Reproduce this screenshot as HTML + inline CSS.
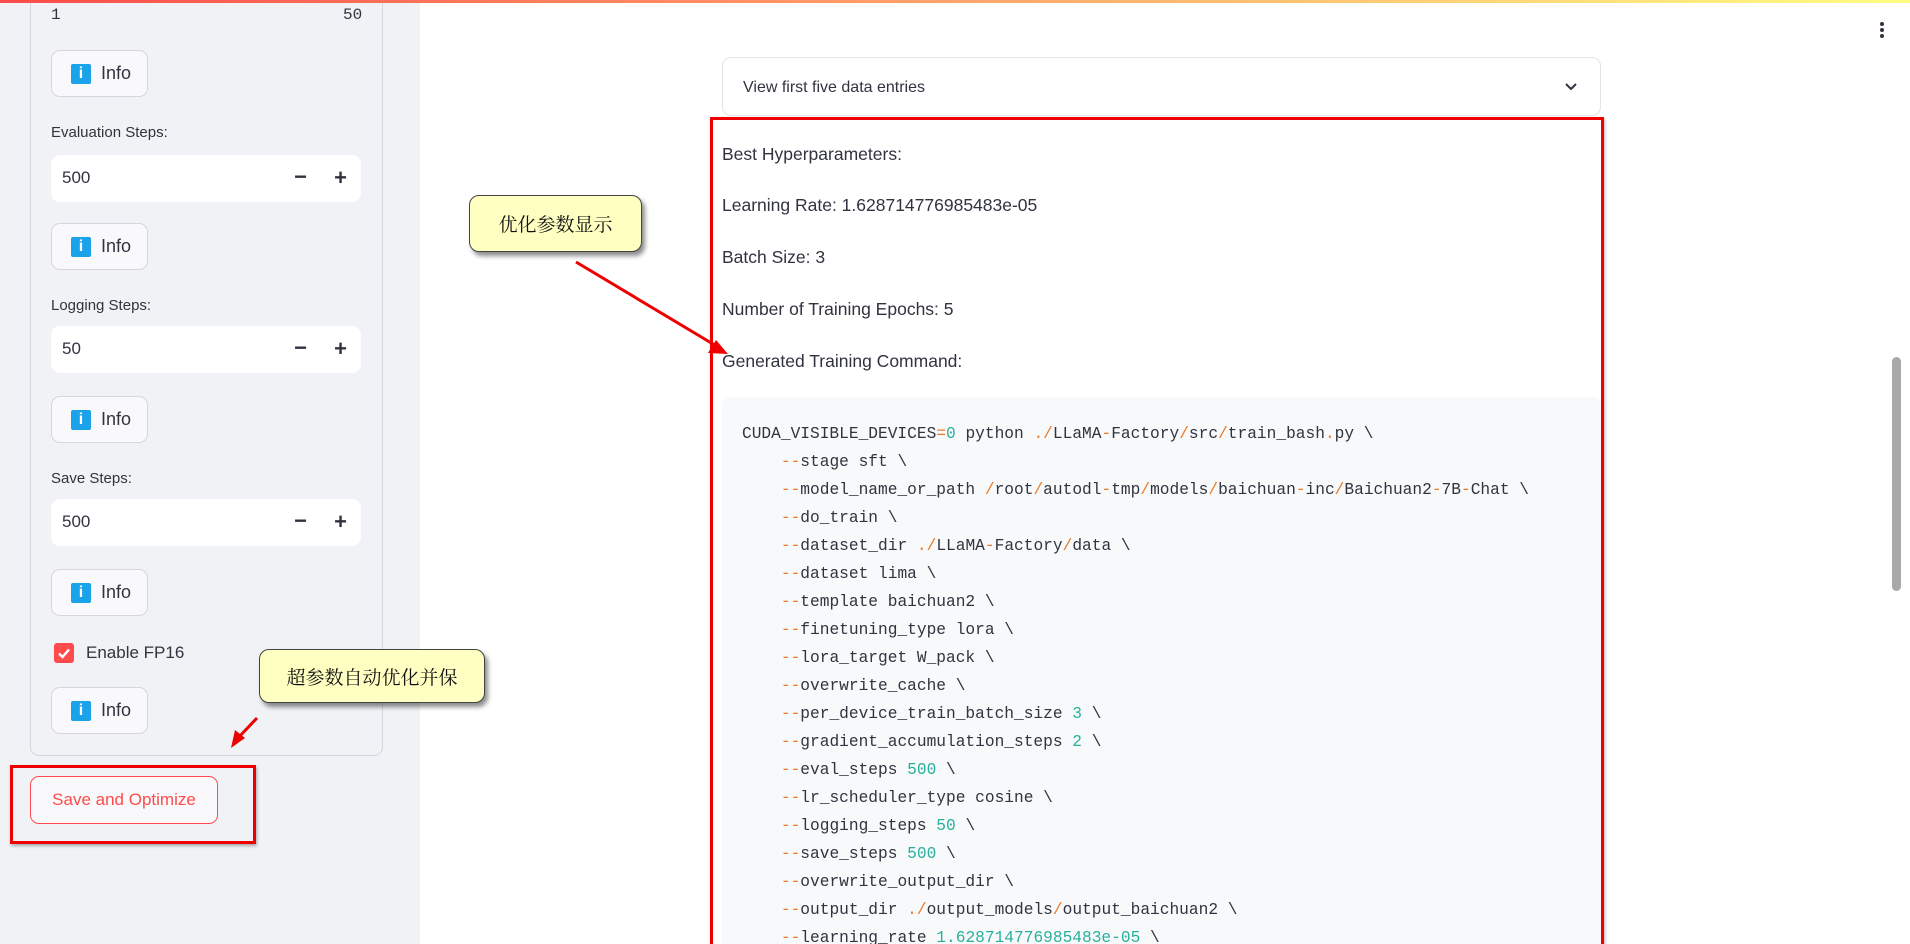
<!DOCTYPE html>
<html><head><meta charset="utf-8">
<style>
*{box-sizing:border-box;margin:0;padding:0}
html,body{width:1910px;height:944px;overflow:hidden}
body{background:#fff;font-family:"Liberation Sans","Noto Sans CJK SC",sans-serif;color:#31333f;position:relative}
.top{position:absolute;left:0;top:0;width:1910px;height:3px;background:linear-gradient(90deg,#ff4b4b,#ffa46b 50%,#fffd80);z-index:5}
.side{position:absolute;left:0;top:0;width:420px;height:944px;background:#f0f2f6}
.box{position:absolute;left:30px;top:-10px;width:353px;height:766px;border:1px solid #d5d7de;border-radius:9px}
.abs{position:absolute}
.info{position:absolute;left:51px;width:97px;height:47px;border:1px solid #d5d7de;border-radius:9px;background:#f9f9fb;font-size:18px;display:flex;align-items:center;padding-left:19px}
.info i{display:inline-block;width:20px;height:20px;background:#1aa3e8;border-radius:2px;color:#fff;font-style:normal;font-weight:bold;font-size:16px;text-align:center;line-height:20px;margin-right:10px}
.lbl{position:absolute;left:51px;font-size:15px}
.inp{position:absolute;left:51px;width:310px;height:47px;background:#fff;border-radius:9px;font-size:17px;padding:13px 0 0 11px}
.inp .pm{position:absolute;right:14px;top:10px;font-size:22px;font-weight:bold}
.inp .m{position:absolute;right:54px;top:9px;font-size:22px;font-weight:bold}
.call{position:absolute;background:#ffffc2;border:1.5px solid #444;border-radius:10px;box-shadow:3px 4px 5px rgba(0,0,0,.45);font-size:19px;color:#111;display:flex;align-items:center;justify-content:center;font-family:"Liberation Serif","Noto Serif CJK SC",serif}
.main p{position:absolute;left:722px;font-size:17.5px}
.code{position:absolute;left:722px;top:397px;width:879px;height:560px;background:#f8f9fb;border-radius:8px}
pre{position:absolute;left:742px;top:420px;font-family:"Liberation Mono",monospace;font-size:16.2px;line-height:28px;color:#31333f}
.o{color:#ea7b29}.t{color:#29b09d}
</style></head><body>
<div class="top"></div>
<div class="side">
  <div class="box"></div>
  <div class="abs" style="left:51px;top:6px;font-family:'Liberation Mono',monospace;font-size:16px">1</div>
  <div class="abs" style="left:343px;top:6px;font-family:'Liberation Mono',monospace;font-size:16px">50</div>
  <div class="info" style="top:50px"><i>i</i>Info</div>
  <div class="lbl" style="top:124px">Evaluation Steps:</div>
  <div class="inp" style="top:155px">500<span class="m">−</span><span class="pm">+</span></div>
  <div class="info" style="top:223px"><i>i</i>Info</div>
  <div class="lbl" style="top:297px">Logging Steps:</div>
  <div class="inp" style="top:326px">50<span class="m">−</span><span class="pm">+</span></div>
  <div class="info" style="top:396px"><i>i</i>Info</div>
  <div class="lbl" style="top:470px">Save Steps:</div>
  <div class="inp" style="top:499px">500<span class="m">−</span><span class="pm">+</span></div>
  <div class="info" style="top:569px"><i>i</i>Info</div>
  <div class="abs" style="left:54px;top:643px;width:20px;height:20px;background:#ff4b4b;border-radius:3px">
    <svg width="20" height="20" viewBox="0 0 20 20"><path d="M5 10.5l3.5 3.5 6.5-7.5" fill="none" stroke="#fff" stroke-width="2.4"/></svg></div>
  <div class="abs" style="left:86px;top:643px;font-size:17px">Enable FP16</div>
  <div class="info" style="top:687px"><i>i</i>Info</div>
  <div class="abs" style="left:30px;top:776px;width:188px;height:48px;border:1px solid #ff4b4b;border-radius:9px;background:#f9f9fb;color:#ff4b4b;font-size:17px;display:flex;align-items:center;justify-content:center">Save and Optimize</div>
  <div class="abs" style="left:10px;top:765px;width:246px;height:79px;border:3px solid #e00;box-shadow:1px 2px 3px rgba(0,0,0,.3)"></div>
</div>
<div class="abs" style="left:722px;top:57px;width:879px;height:59px;border:1px solid #e3e4e8;border-radius:9px;font-size:16px;padding:21px 0 0 20px">View first five data entries
  <svg class="abs" style="right:22px;top:22px" width="14" height="14" viewBox="0 0 14 14"><path d="M2 4l5 5 5-5" fill="none" stroke="#31333f" stroke-width="2"/></svg></div>
<div class="main">
<p style="top:144px">Best Hyperparameters:</p>
<p style="top:195px">Learning Rate: 1.628714776985483e-05</p>
<p style="top:247px">Batch Size: 3</p>
<p style="top:299px">Number of Training Epochs: 5</p>
<p style="top:351px">Generated Training Command:</p>
</div>
<div class="code"></div>
<pre>CUDA_VISIBLE_DEVICES<span class="o">=</span><span class="t">0</span> python <span class="o">./</span>LLaMA<span class="o">-</span>Factory<span class="o">/</span>src<span class="o">/</span>train_bash<span class="o">.</span>py \
    <span class="o">--</span>stage sft \
    <span class="o">--</span>model_name_or_path <span class="o">/</span>root<span class="o">/</span>autodl<span class="o">-</span>tmp<span class="o">/</span>models<span class="o">/</span>baichuan<span class="o">-</span>inc<span class="o">/</span>Baichuan2<span class="o">-</span>7B<span class="o">-</span>Chat \
    <span class="o">--</span>do_train \
    <span class="o">--</span>dataset_dir <span class="o">./</span>LLaMA<span class="o">-</span>Factory<span class="o">/</span>data \
    <span class="o">--</span>dataset lima \
    <span class="o">--</span>template baichuan2 \
    <span class="o">--</span>finetuning_type lora \
    <span class="o">--</span>lora_target W_pack \
    <span class="o">--</span>overwrite_cache \
    <span class="o">--</span>per_device_train_batch_size <span class="t">3</span> \
    <span class="o">--</span>gradient_accumulation_steps <span class="t">2</span> \
    <span class="o">--</span>eval_steps <span class="t">500</span> \
    <span class="o">--</span>lr_scheduler_type cosine \
    <span class="o">--</span>logging_steps <span class="t">50</span> \
    <span class="o">--</span>save_steps <span class="t">500</span> \
    <span class="o">--</span>overwrite_output_dir \
    <span class="o">--</span>output_dir <span class="o">./</span>output_models<span class="o">/</span>output_baichuan2 \
    <span class="o">--</span>learning_rate <span class="t">1.628714776985483e-05</span> \</pre>
<div class="abs" style="left:710px;top:117px;width:894px;height:840px;border:3px solid #e00;box-shadow:1px 2px 3px rgba(0,0,0,.3)"></div>
<div class="call" style="left:469px;top:195px;width:173px;height:57px">优化参数显示</div>
<div class="call" style="left:259px;top:649px;width:226px;height:54px">超参数自动优化并保</div>
<svg class="abs" style="left:0;top:0" width="1910" height="944">
  <line x1="576" y1="262" x2="718" y2="347" stroke="#e00" stroke-width="3"/>
  <polygon points="728,354 708,353 716,340" fill="#e00"/>
  <line x1="257" y1="718" x2="238" y2="738" stroke="#e00" stroke-width="3"/>
  <polygon points="231,748 235,730 245,738" fill="#e00"/>
</svg>
<div class="abs" style="left:1892px;top:357px;width:9px;height:234px;background:#a8a8a8;border-radius:5px"></div>
<div class="abs" style="left:1880px;top:22px;width:4px">
  <div style="width:4px;height:4px;background:#31333f;border-radius:2px;margin-bottom:2px"></div>
  <div style="width:4px;height:4px;background:#31333f;border-radius:2px;margin-bottom:2px"></div>
  <div style="width:4px;height:4px;background:#31333f;border-radius:2px"></div>
</div>
</body></html>
